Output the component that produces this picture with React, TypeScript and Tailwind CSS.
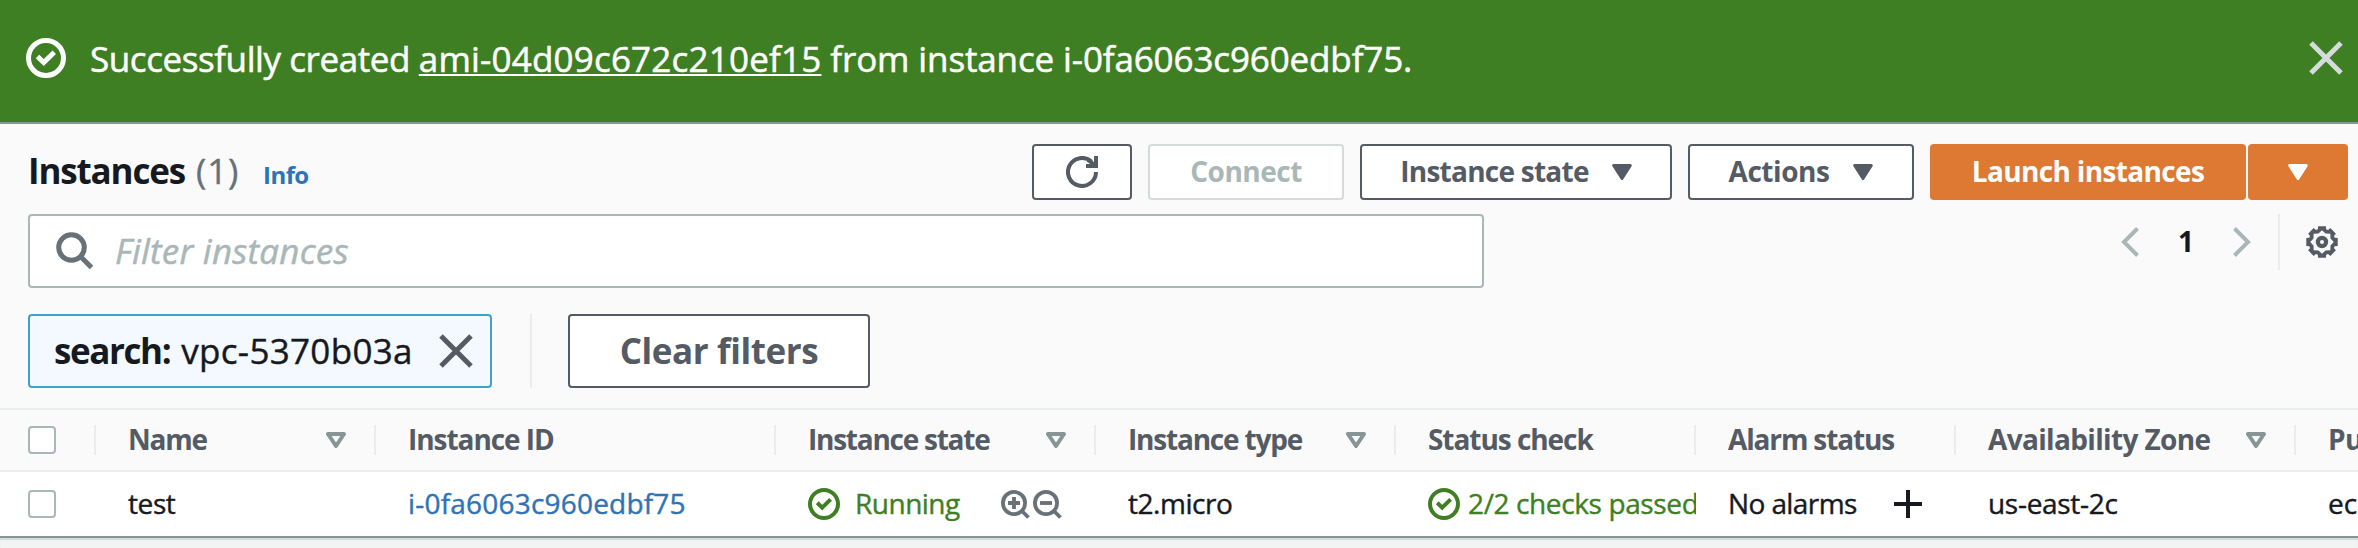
import React from 'react';

const CheckCircle = ({ className }: { className: string }) => (
  <svg viewBox="0 0 16 16" className={className} fill="none" stroke="currentColor" strokeWidth="2">
    <circle cx="8" cy="8" r="7" />
    <path d="M4.6 7.4 7.1 9.8 11.3 5.7" />
  </svg>
);

const Close = ({ className }: { className: string }) => (
  <svg viewBox="0 0 34 34" className={className} fill="none" stroke="currentColor" strokeWidth="5">
    <path d="M2 2 32 32M32 2 2 32" />
  </svg>
);

const Caret = ({ className = '' }: { className?: string }) => (
  <svg viewBox="0 0 20 16" className={`h-4 w-5 shrink-0 ${className}`} fill="currentColor" stroke="currentColor" strokeWidth="3" strokeLinejoin="round">
    <path d="M1.7 1.5H18.3L10 14.5Z" />
  </svg>
);

const SortCaret = () => (
  <svg viewBox="0 0 20 16" className="h-4 w-5 shrink-0 text-[#879596]" fill="none" stroke="currentColor" strokeWidth="4" strokeLinejoin="round">
    <path d="M2 2H18L10 14Z" />
  </svg>
);

const Refresh = () => (
  <svg viewBox="0 0 32 32" className="size-8" fill="none" stroke="currentColor" strokeWidth="4">
    <path d="M30 16A14 14 0 1 1 25.5 5.7" />
    <path d="M30 0V10H20" />
    <path d="M22 4 30 10" />
  </svg>
);

const Magnifier = ({ plus = false }: { plus?: boolean }) => (
  <svg viewBox="0 0 30 30" className="size-[30px] text-[#687078]" fill="none" stroke="currentColor" strokeWidth="3.8">
    <circle cx="14" cy="14" r="11.1" />
    <path d="M21.5 21.5 28.5 28.5" />
    <path d={plus ? 'M8 14H20M14 8V20' : 'M8 14H20'} />
  </svg>
);

const polar = (r: number, deg: number) => {
  const a = (deg * Math.PI) / 180;
  return `${(16 + r * Math.sin(a)).toFixed(2)} ${(16 - r * Math.cos(a)).toFixed(2)}`;
};
const teeth = [0, 45, 90, 135, 180, 225, 270, 315];
const gearOuter = teeth.map((d) => [polar(13.4, d - 18), polar(16.2, d - 14), polar(16.2, d + 14), polar(13.4, d + 18)].join('L')).join('L');
const gearInner = teeth.map((d) => [polar(11.8, d), polar(9.2, d + 22.5)].join('L')).join('L');

const Gear = () => (
  <svg viewBox="0 0 32 32" className="size-8 text-[#545b64]">
    <path d={`M${gearOuter}ZM${gearInner}Z`} fill="currentColor" fillRule="evenodd" />
    <circle cx="16" cy="16" r="4.1" fill="none" stroke="currentColor" strokeWidth="4.2" />
  </svg>
);

const Checkbox = () => <span className="block size-7 rounded-[4px] border-2 border-[#aab7b8] bg-white" />;

const HeadCell = ({ label, tracking, sort }: { label: string; tracking: string; sort?: boolean }) => (
  <div className="flex h-[30px] items-center justify-between border-r-2 border-[#eaeded] pr-7 pl-8">
    <span className={`relative -top-px font-bold ${tracking}`}>{label}</span>
    {sort && <SortCaret />}
  </div>
);

const grid = 'grid grid-cols-[96px_280px_400px_320px_300px_300px_260px_340px_200px] items-center';
const button = 'flex h-14 shrink-0 items-center justify-center rounded-[4px] border-2 border-[#545b64] bg-white text-[28px] leading-none font-bold text-[#545b64]';

export default function App() {
  return (
    <div className="flex h-[548px] w-[2358px] flex-col overflow-hidden bg-[#f2f3f3] font-['Open_Sans',sans-serif] text-[#16191f]">
      <header className="flex h-[122px] shrink-0 items-start bg-[#3f7f23] pr-[15px] pl-[26px] text-white">
        <CheckCircle className="mt-[38px] size-10" />
        <p className="mt-[34px] ml-[24px] text-[35px] leading-[50px] whitespace-pre [-webkit-text-stroke:0.5px]">
          <span className="tracking-[-0.42px]">Successfully created </span>
          <a className="tracking-[0.2px] underline decoration-2 [text-decoration-skip-ink:none] underline-offset-[2px]">ami-04d09c672c210ef15</a>
          <span className="tracking-[-0.13px]"> from instance i-0fa6063c960edbf75.</span>
        </p>
        <Close className="mt-[41px] ml-auto size-[34px] text-[#d5dbdb]" />
      </header>

      <main className="flex h-[414px] shrink-0 flex-col border-t-2 border-[#879596] bg-[#fafafa]">
        <div className="flex h-[90px] shrink-0 items-start justify-between pt-5 pr-[10px] pl-7">
          <div className="flex items-baseline pt-[2px] text-[35px] leading-[50px] whitespace-pre">
            <h1 className="font-bold tracking-[-1.15px]">Instances</h1>
            <span className="ml-[11px] tracking-[0.8px] text-[#687078] [-webkit-text-stroke:0.4px]">(1)</span>
            <a className="ml-[24px] text-[24px] font-bold tracking-[-0.6px] text-[#2e73b8]">Info</a>
          </div>
          <div className="flex">
            <div className={`${button} w-[100px]`}><Refresh /></div>
            <div className="ml-4 flex h-14 w-[196px] items-center justify-center rounded-[4px] border-2 border-[#d5dbdb] bg-white pb-[2px] text-[28px] leading-none font-bold tracking-[-0.5px] text-[#aab7b8]">Connect</div>
            <div className={`${button} ml-4 w-[312px] gap-[23px]`}>
              <span className="relative -top-px tracking-[-0.75px]">Instance state</span><Caret />
            </div>
            <div className={`${button} ml-4 w-[226px] gap-6`}>
              <span className="relative -top-px tracking-[-0.45px]">Actions</span><Caret />
            </div>
            <div className="ml-4 flex h-14 w-[316px] items-center justify-center rounded-[4px] bg-[#dd7932] pb-[2px] text-[28px] leading-none font-bold tracking-[-0.65px] text-white">Launch instances</div>
            <div className="ml-[2px] flex h-14 w-[100px] items-center justify-center rounded-[4px] bg-[#dd7932] text-white"><Caret /></div>
          </div>
        </div>

        <div className="flex h-[100px] shrink-0 items-start justify-between pr-5 pl-7">
          <div className="flex h-[74px] w-[1456px] items-center rounded-[4px] border-2 border-[#aab7b8] bg-white pl-[26px]">
            <svg viewBox="0 0 38 38" className="size-[38px] text-[#687078]" fill="none" stroke="currentColor" strokeWidth="5">
              <circle cx="15.5" cy="15.5" r="12.8" />
              <path d="M24.5 24.5 35.5 35.5" />
            </svg>
            <span className="ml-[21px] pb-[2px] text-[35px] leading-none tracking-[0.22px] text-[#aab7b8] italic [-webkit-text-stroke:0.5px]">Filter instances</span>
          </div>
          <div className="flex h-14 items-center">
            <svg viewBox="0 0 18 30" className="h-[30px] w-[18px] text-[#aab7b8]" fill="none" stroke="currentColor" strokeWidth="4"><path d="M16.5 1.5 3 15 16.5 28.5" /></svg>
            <span className="w-[94px] pb-[2px] text-center text-[28px] leading-none font-bold">1</span>
            <svg viewBox="0 0 18 30" className="h-[30px] w-[18px] text-[#aab7b8]" fill="none" stroke="currentColor" strokeWidth="4"><path d="M1.5 1.5 15 15 1.5 28.5" /></svg>
            <span className="mr-[26px] ml-[27px] h-14 w-[2px] bg-[#eaeded]" />
            <Gear />
          </div>
        </div>

        <div className="flex h-[94px] shrink-0 items-start pl-7 text-[35px] leading-none">
          <div className="flex h-[74px] w-[464px] items-center justify-between rounded-[4px] border-2 border-[#44a0c6] bg-[#f3f9fe] pr-[17px] pl-[24px]">
            <span className="flex pb-px"><b className="tracking-[-1.4px]">search:</b><span className="ml-[11px] tracking-[0.3px] [-webkit-text-stroke:0.4px]">vpc-5370b03a</span></span>
            <Close className="size-[34px] text-[#545b64]" />
          </div>
          <span className="mr-9 ml-[38px] h-[74px] w-[2px] bg-[#eaeded]" />
          <div className="flex h-[74px] w-[302px] items-center justify-center rounded-[4px] border-2 border-[#545b64] bg-white pb-px font-bold tracking-[-0.4px] text-[#545b64]">Clear filters</div>
        </div>

        <div className={`${grid} h-16 shrink-0 border-y-2 border-[#eaeded] text-[28px] leading-none whitespace-nowrap text-[#545b64]`}>
          <div className="flex h-[30px] items-center border-r-2 border-[#eaeded] pl-7"><Checkbox /></div>
          <HeadCell label="Name" tracking="tracking-[-1.2px]" sort />
          <HeadCell label="Instance ID" tracking="tracking-[-1.05px]" />
          <HeadCell label="Instance state" tracking="tracking-[-1.25px]" sort />
          <HeadCell label="Instance type" tracking="tracking-[-1.2px]" sort />
          <HeadCell label="Status check" tracking="tracking-[-1.05px]" />
          <HeadCell label="Alarm status" tracking="tracking-[-1.15px]" />
          <HeadCell label="Availability Zone" tracking="tracking-[-0.65px]" sort />
          <HeadCell label="Public IPv4 DNS" tracking="tracking-[-0.7px]" />
        </div>

        <div className={`${grid} h-16 shrink-0 bg-white text-[28px] leading-none whitespace-nowrap [-webkit-text-stroke:0.4px]`}>
          <div className="pl-7"><Checkbox /></div>
          <div className="pb-[2px] pl-8 tracking-[-0.4px]">test</div>
          <a className="pb-[2px] pl-8 tracking-[0.2px] text-[#2e73b8]">i-0fa6063c960edbf75</a>
          <div className="flex items-center pl-8 text-[#3f7f23]">
            <CheckCircle className="size-8" />
            <span className="ml-[15px] w-[145px] pb-[2px] tracking-[-0.5px]">Running</span>
            <span className="flex gap-[2px]"><Magnifier plus /><Magnifier /></span>
          </div>
          <div className="pb-[2px] pl-8 tracking-[-0.45px]">t2.micro</div>
          <div className="flex items-center overflow-hidden pl-8 text-[#3f7f23]">
            <CheckCircle className="size-8 shrink-0" />
            <span className="ml-2 pt-1 pb-[6px] tracking-[-0.38px]">2/2 checks passed</span>
          </div>
          <div className="flex items-center pl-8">
            <span className="w-[166px] pb-[2px] tracking-[-0.6px]">No alarms</span>
            <svg viewBox="0 0 28 28" className="size-7" stroke="currentColor" strokeWidth="4"><path d="M0 14H28M14 0V28" /></svg>
          </div>
          <div className="pb-[2px] pl-8 tracking-[-0.3px]">us-east-2c</div>
          <div className="pb-[2px] pl-8">ec2-3-15-208-14</div>
        </div>
      </main>
      <div className="h-[12px] shrink-0 border-t-2 border-[#879596] shadow-[inset_0_2px_1px_#d5dbdb]" />
    </div>
  );
}
